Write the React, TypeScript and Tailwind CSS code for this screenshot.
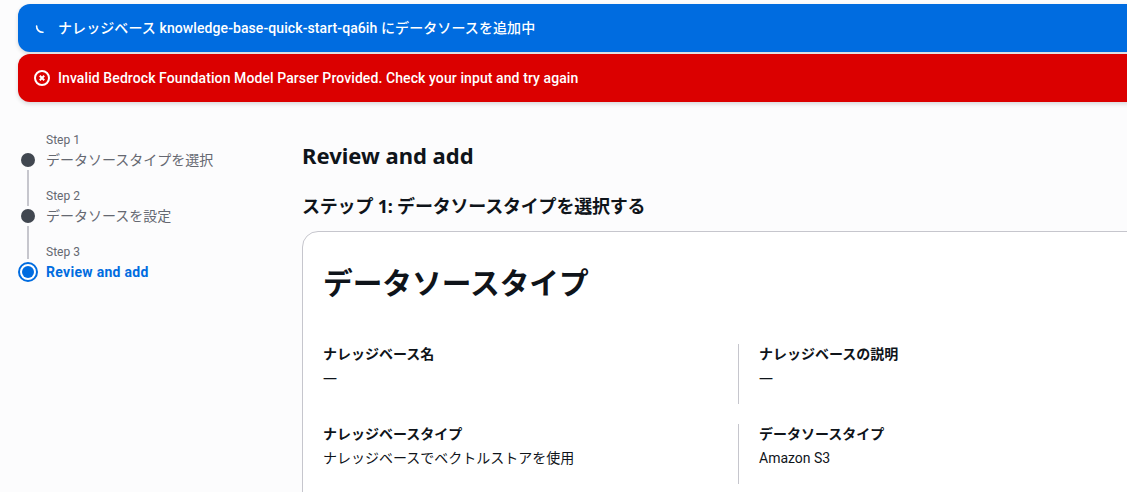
import React from 'react';

const FONT = "font-['Roboto','Noto_Sans_CJK_JP',sans-serif]";
const HEADING = "font-['Noto_Sans','Noto_Sans_CJK_JP',sans-serif]";

const Flash = ({ color, icon, text }: { color: string; icon: React.ReactNode; text: string }) => (
  <div className={`${color} h-12 rounded-l-[12px] pl-[16px] flex items-center text-white text-[14px] font-medium tracking-[0.09px] shadow-[0_2px_4px_rgba(0,7,22,0.15)]`}>
    <span className="w-[16px] h-[16px] mr-[8px] shrink-0 flex items-center justify-center">{icon}</span>
    <span className="whitespace-nowrap">{text}</span>
  </div>
);

const StepText = ({ label, title, active }: { label: string; title: string; active?: boolean }) => (
  <div className="h-14 pt-[2px]">
    <div className="text-[12px] leading-[20px] text-[#656871]">{label}</div>
    <div className={active ? 'text-[14px] leading-[20px] font-bold tracking-[0.3px] text-[#006ce0]' : 'text-[14px] leading-[20px] text-[#656871]'}>{title}</div>
  </div>
);

const Field = ({ label, value, divider }: { label: string; value: string; divider?: boolean }) => (
  <div className={divider ? 'border-l border-[#c6c6cd] pl-5 h-[60px]' : 'h-[60px]'}>
    <div className="text-[14px] leading-[20px] font-bold text-[#0f141a]">{label}</div>
    <div className={`${value === '—' ? HEADING : ''} text-[14px] leading-[20px] mt-[4px] text-[#0f141a]`}>{value}</div>
  </div>
);

export default function App() {
  return (
    <div className={`${FONT} w-[1127px] h-[492px] overflow-hidden bg-[#fcfcfd] pt-1`}>
      <div className="ml-[18px] w-[1200px] flex flex-col gap-[2px]">
        <Flash
          color="bg-[#006ce0]"
          text="ナレッジベース knowledge-base-quick-start-qa6ih にデータソースを追加中"
          icon={
            <svg viewBox="0 0 16 16" className="w-4 h-4" fill="none" stroke="#fff" strokeWidth="1.6">
              <path d="M2.6 6 A6 6 0 0 0 9 12.3" strokeLinecap="round" />
            </svg>
          }
        />
        <Flash
          color="bg-[#db0000]"
          text="Invalid Bedrock Foundation Model Parser Provided. Check your input and try again"
          icon={
            <svg viewBox="0 0 16 16" className="w-4 h-4" fill="none" stroke="#fff" strokeWidth="2">
              <circle cx="8" cy="8" r="7" />
              <path d="M5.8 5.8l4.4 4.4M10.2 5.8l-4.4 4.4" />
            </svg>
          }
        />
      </div>

      <div className="flex pl-[18px] pt-[26px]">
        <div className="w-[284px] shrink-0 flex">
          <div className="w-5 mr-[8px] pt-[25px] flex flex-col items-center shrink-0">
            <div className="w-[14px] h-[14px] rounded-full bg-[#414750]" />
            <div className="w-[2px] h-[42px] py-[3px]"><div className="h-full bg-[#c6c6cd]" /></div>
            <div className="w-[14px] h-[14px] rounded-full bg-[#414750]" />
            <div className="w-[2px] h-[39px] py-[3px]"><div className="h-full bg-[#c6c6cd]" /></div>
            <div className="w-5 h-5 rounded-full border-2 border-[#006ce0] bg-white flex items-center justify-center">
              <div className="w-3 h-3 rounded-full bg-[#006ce0]" />
            </div>
          </div>
          <div>
            <StepText label="Step 1" title="データソースタイプを選択" />
            <StepText label="Step 2" title="データソースを設定" />
            <StepText label="Step 3" title="Review and add" active />
          </div>
        </div>
        <div className="w-[1000px] shrink-0">
          <h1 className={`${HEADING} text-[22px] leading-[28px] font-bold text-[#0f141a] mt-[13px]`}>Review and add</h1>
          <h2 className={`${HEADING} text-[18px] leading-[24px] font-bold tracking-[-0.2px] text-[#0f141a] mt-[25px]`}>ステップ 1: データソースタイプを選択する</h2>
          <div className="mt-[13px] bg-white border border-[#c6c6cd] rounded-tl-[16px] h-[300px] pl-5 pt-[21px]">
            <div className="text-[29.7px] leading-[62px] font-bold text-[#0f141a]">データソースタイプ</div>
            <div className="grid grid-cols-[415px_415px] mt-[29px] gap-y-[20px]">
              <Field label="ナレッジベース名" value="—" />
              <Field label="ナレッジベースの説明" value="—" divider />
              <Field label="ナレッジベースタイプ" value="ナレッジベースでベクトルストアを使用" />
              <Field label="データソースタイプ" value="Amazon S3" divider />
            </div>
          </div>
        </div>
      </div>
    </div>
  );
}
